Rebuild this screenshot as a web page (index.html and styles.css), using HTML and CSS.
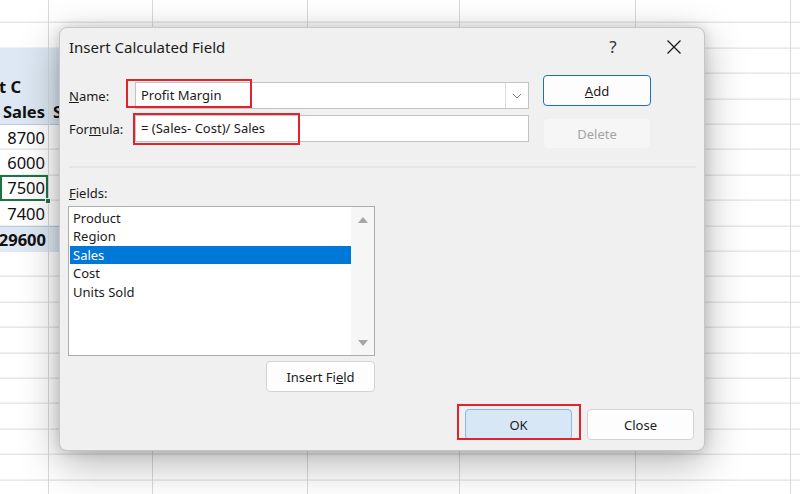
FILE: index.html
```html
<!DOCTYPE html>
<html>
<head>
<meta charset="utf-8">
<link rel="stylesheet" href="styles.css">
</head>
<body>
<div class="sheet">
  <div class="col c0">
    <div class="cell spacer"></div>
    <div class="cell hdr"></div>
    <div class="cell hdr bold cap">Product C</div>
    <div class="cell hdr bold last num">Sales</div>
    <div class="cell num">8700</div>
    <div class="cell num">6000</div>
    <div class="cell num sel">7500<span class="handle"></span></div>
    <div class="cell num">7400</div>
    <div class="cell total bold num">29600</div>
  </div>
  <div class="col c1">
    <div class="cell spacer"></div>
    <div class="cell hdr"></div>
    <div class="cell hdr"></div>
    <div class="cell hdr bold last">Sales</div>
    <div class="cell"></div>
    <div class="cell"></div>
    <div class="cell"></div>
    <div class="cell"></div>
    <div class="cell total"></div>
  </div>
  <div class="col c2"></div>
  <div class="col c3"></div>
  <div class="col c4"></div>
  <div class="col c5"></div>
  <div class="col c6"></div>
</div>

<div class="dialog">
  <div class="titlebar">
    <div class="title">Insert Calculated Field</div>
    <div class="help">?</div>
    <div class="close">
      <svg width="16" height="16" viewBox="0 0 16 16"><path d="M1.5 1.5 L14.5 14.5 M14.5 1.5 L1.5 14.5" stroke="#1b1b1b" stroke-width="1.3" fill="none"/></svg>
    </div>
  </div>
  <div class="body">
    <div class="top">
      <div class="form">
        <div class="row">
          <div class="label"><u>N</u>ame:</div>
          <div class="combo">
            <div class="text">Profit Margin</div>
            <div class="drop"><svg width="10" height="6" viewBox="0 0 10 6"><path d="M1 1 L5 5 L9 1" stroke="#7a7a7a" stroke-width="1" fill="none"/></svg></div>
          </div>
        </div>
        <div class="row">
          <div class="label">For<u>m</u>ula:</div>
          <div class="combo">
            <div class="text">= (Sales- Cost)/ Sales</div>
          </div>
        </div>
      </div>
      <div class="actions">
        <div class="btn btn-add"><span><u>A</u>dd</span></div>
        <div class="btn btn-delete">Delete</div>
      </div>
    </div>
    <div class="sep"></div>
    <div class="fields-label"><u>F</u>ields:</div>
    <div class="listbox">
      <div class="items">
        <div class="item">Product</div>
        <div class="item">Region</div>
        <div class="item selected">Sales</div>
        <div class="item">Cost</div>
        <div class="item">Units Sold</div>
      </div>
      <div class="scroll">
        <svg width="10" height="6" viewBox="0 0 10 6"><path d="M0 6 L5 0 L10 6 Z" fill="#a6a6a6"/></svg>
        <svg width="10" height="6" viewBox="0 0 10 6"><path d="M0 0 L5 6 L10 0 Z" fill="#a6a6a6"/></svg>
      </div>
    </div>
    <div class="insert-row">
      <div class="btn btn-insert">Insert Fi<u>e</u>ld</div>
    </div>
    <div class="footer">
      <div class="btn btn-ok">OK</div>
      <div class="btn btn-close">Close</div>
    </div>
  </div>
  <div class="mark mark-name"></div>
  <div class="mark mark-formula"></div>
  <div class="mark mark-ok"></div>
</div>
</body>
</html>
```

FILE: styles.css
```css
html, body {
  margin: 0;
  padding: 0;
}
body {
  width: 800px;
  height: 494px;
  overflow: hidden;
  background: #ffffff;
  font-family: "Noto Sans", "Open Sans", sans-serif;
  position: relative;
}

/* spreadsheet */
.sheet {
  display: flex;
  height: 494px;
}
.col {
  flex: none;
  height: 100%;
  box-sizing: border-box;
  border-right: 1px solid #dadada;
  background-image: repeating-linear-gradient(to bottom, transparent 0, transparent 24.4px, #dadada 24.4px, #dadada 25.4px);
  background-position: 0 -2.4px;
}
.c0 { width: 49px; }
.c1 { width: 104px; }
.c2 { width: 155px; }
.c3 { width: 152px; }
.c4 { width: 176px; }
.c5 { width: 155px; }
.c6 { flex: 1; border-right: none; }

.cell {
  position: relative;
  height: 25.4px;
  box-sizing: border-box;
  font-size: 16.5px;
  line-height: 25px;
  padding: 0 3px 0 4px;
  white-space: nowrap;
  overflow: hidden;
  color: #111;
}
.spacer { height: 48.4px; }
.hdr { background: #dde8f4; }
.hdr.last { border-bottom: 1px solid #b7cbe2; }
.num { text-align: right; direction: rtl; }
.cap { text-align: right; padding-right: 27px; direction: rtl; }
.bold { font-weight: 700; }
.total {
  background: #dde8f4;
  border-top: 1px solid #b7cbe2;
}
.c0 .total { padding-right: 2px; }
.sel {
  overflow: visible;
  box-shadow: inset 0 0 0 2px #1f7244;
  z-index: 1;
}
.handle {
  position: absolute;
  right: -3px;
  bottom: -3px;
  width: 6px;
  height: 6px;
  background: #1f7244;
  border: 1px solid #fff;
  box-sizing: border-box;
}

/* dialog */
.dialog {
  position: absolute;
  left: 59px;
  top: 27px;
  width: 646px;
  height: 424px;
  box-sizing: border-box;
  background: #f0f0f0;
  border: 1px solid #c6c6c6;
  border-radius: 8px;
  box-shadow: 0 12px 40px rgba(0, 0, 0, 0.3), 0 0 12px rgba(0, 0, 0, 0.14);
  font-size: 13px;
  color: #1b1b1b;
  display: flex;
  flex-direction: column;
  z-index: 5;
}
.titlebar {
  height: 37px;
  flex: none;
  display: flex;
  align-items: center;
  padding: 0 7px 0 9px;
}
.title {
  flex: 1;
  font-size: 15px;
  color: #1b1b1b;
}
.help {
  width: 46px;
  margin-right: 15px;
  text-align: center;
  font-size: 17px;
  color: #333;
}
.close {
  width: 46px;
  display: flex;
  justify-content: center;
  align-items: center;
}

.body {
  display: flex;
  flex-direction: column;
  padding-left: 9px;
}
.top {
  display: flex;
  align-items: flex-start;
}
.form {
  margin-top: 17px;
}
.row {
  display: flex;
  align-items: center;
  height: 27px;
}
.row + .row { margin-top: 6px; }
.label {
  width: 66px;
  flex: none;
}
.combo {
  width: 394px;
  height: 27px;
  box-sizing: border-box;
  border: 1px solid #c3c3c3;
  background: #fff;
  display: flex;
}
.combo .text {
  flex: 1;
  padding-left: 5px;
  line-height: 25px;
  white-space: nowrap;
}
.drop {
  width: 22px;
  border-left: 1px solid #dcdcdc;
  display: flex;
  align-items: center;
  justify-content: center;
}

.actions {
  margin-left: 14px;
  margin-top: 10px;
  display: flex;
  flex-direction: column;
}
.btn {
  box-sizing: border-box;
  height: 31px;
  width: 107px;
  border-radius: 4px;
  border: 1px solid #d3d3d3;
  background: #fdfdfd;
  display: flex;
  align-items: center;
  justify-content: center;
  font-size: 13px;
  color: #1b1b1b;
}
.btn-add {
  width: 108px;
  border-color: #1a6fbf;
  background: #fdfdfd;
}
.btn-delete {
  margin-top: 13px;
  margin-left: 1px;
  width: 106px;
  height: 29px;
  background: #f6f6f6;
  border-color: #f6f6f6;
  color: #a4a4a4;
}

.sep {
  margin-top: 18px;
  width: 627px;
  height: 2px;
  background: #e5e5e5;
}
.fields-label {
  margin-top: 16px;
  line-height: 18px;
}
.listbox {
  margin-top: 4px;
  margin-left: -1px;
  width: 307px;
  height: 150px;
  box-sizing: border-box;
  border: 1px solid #adadad;
  background: #fff;
  display: flex;
}
.items {
  width: 282px;
  padding: 2px 0 0 1px;
  box-sizing: border-box;
}
.item {
  height: 18.4px;
  line-height: 18.4px;
  padding-left: 3px;
  white-space: nowrap;
}
.item.selected {
  background: #0078d7;
  color: #fff;
}
.scroll {
  flex: 1;
  background: #f6f6f6;
  display: flex;
  flex-direction: column;
  justify-content: space-between;
  align-items: center;
  padding: 10px 0 9px;
}

.insert-row {
  width: 307px;
  margin-left: -1px;
  margin-top: 5px;
  display: flex;
  justify-content: flex-end;
}
.btn-insert { width: 109px; }

.footer {
  display: flex;
  justify-content: flex-end;
  gap: 15px;
  margin-top: 17px;
  padding-right: 10px;
}
.btn-ok {
  background: #d8e7f6;
  border-color: #8db8e2;
}

/* annotation boxes */
.mark {
  position: absolute;
  box-sizing: border-box;
  border: 2px solid #e2232b;
}
.mark-name { left: 66px; top: 51px; width: 126px; height: 29px; }
.mark-formula { left: 73px; top: 85px; width: 167px; height: 32px; }
.mark-ok { left: 397px; top: 376px; width: 124px; height: 36px; }
```
